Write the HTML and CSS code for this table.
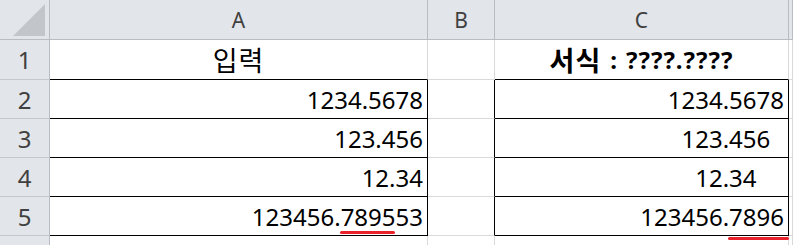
FILE: index.html
```html
<!DOCTYPE html>
<html lang="ko">
<head>
<meta charset="utf-8">
<link rel="stylesheet" href="styles.css">
</head>
<body>
<div class="sheet">
  <div class="corner"><svg width="49" height="39" viewBox="0 0 49 39"><polygon points="13,36 45,36 45,4" fill="#c2c5c9"/></svg></div>
  <div class="colhead">A</div>
  <div class="colhead">B</div>
  <div class="colhead">C</div>
  <div class="colhead"></div>

  <div class="rowhead">1</div>
  <div class="cell center top-box"><span class="ko">입력</span></div>
  <div class="cell"></div>
  <div class="cell center bold top-box"><span class="ko">서식</span><span class="sep">:</span><span class="q">????.????</span></div>
  <div class="cell"></div>

  <div class="rowhead">2</div>
  <div class="cell num box">1234.5678</div>
  <div class="cell left-of-box"></div>
  <div class="cell num box">1234.5678</div>
  <div class="cell"></div>

  <div class="rowhead">3</div>
  <div class="cell num box">123.456</div>
  <div class="cell left-of-box"></div>
  <div class="cell num box pad1">123.456</div>
  <div class="cell"></div>

  <div class="rowhead">4</div>
  <div class="cell num box">12.34</div>
  <div class="cell left-of-box"></div>
  <div class="cell num box pad2">12.34</div>
  <div class="cell"></div>

  <div class="rowhead">5</div>
  <div class="cell num box">123456.789553<span class="mark mark-a"></span></div>
  <div class="cell left-of-box"></div>
  <div class="cell num box">123456.7896</div>
  <div class="cell"></div>

  <div class="rowhead"></div>
  <div class="cell"></div>
  <div class="cell"></div>
  <div class="cell"><span class="mark mark-c"></span></div>
  <div class="cell"></div>
</div>
</body>
</html>
```

FILE: styles.css
```css
html, body {
  margin: 0;
  padding: 0;
  background: #ffffff;
}

.sheet {
  width: 793px;
  height: 245px;
  overflow: hidden;
  display: grid;
  grid-template-columns: 50px 378px 67px 294px 4px;
  grid-template-rows: 40px 40px 39px 39px 39px 39px 10px;
  font-family: "Noto Sans", "Noto Sans CJK KR", sans-serif;
  color: #000;
}

.sheet > div {
  box-sizing: border-box;
  min-width: 0;
}

.corner {
  background: #e2e5e9;
  border-right: 1px solid #b9bcc0;
  border-bottom: 1px solid #b9bcc0;
}

.corner svg {
  display: block;
}

.colhead {
  background: #e2e5e9;
  border-right: 1px solid #b9bcc0;
  border-bottom: 1px solid #b9bcc0;
  display: flex;
  align-items: center;
  justify-content: center;
  font-size: 21px;
  color: #404040;
}

.rowhead {
  background: #e2e5e9;
  border-right: 1px solid #b9bcc0;
  border-bottom: 1px solid #c4c7cb;
  display: flex;
  align-items: center;
  justify-content: center;
  font-size: 24px;
  color: #404040;
}

.cell {
  position: relative;
  border-right: 1px solid #d9d9d9;
  border-bottom: 1px solid #d9d9d9;
  display: flex;
  align-items: center;
  font-size: 24px;
  white-space: nowrap;
}

.center {
  justify-content: center;
}

.bold {
  font-weight: 700;
}

.ko {
  font-family: "Noto Sans CJK KR", sans-serif;
  font-size: 27px;
  letter-spacing: 1px;
}

.sep {
  margin: 0 9px 0 9px;
}

.q {
  letter-spacing: 1px;
}

.num {
  justify-content: flex-end;
  padding-right: 4px;
}

.pad1 {
  padding-right: calc(4px + 1ch);
}

.pad2 {
  padding-right: calc(4px + 2ch);
}

.top-box {
  border-bottom-color: #000;
}

.box {
  border-right-color: #000;
  border-bottom-color: #000;
}

.left-of-box {
  border-right-color: #000;
}

.mark {
  position: absolute;
  height: 3px;
  border-radius: 2px;
  background: #e8212b;
}

.mark-a {
  right: 32px;
  width: 55px;
  bottom: 1px;
}

.mark-c {
  right: -1px;
  width: 61px;
  top: 1px;
}
```
